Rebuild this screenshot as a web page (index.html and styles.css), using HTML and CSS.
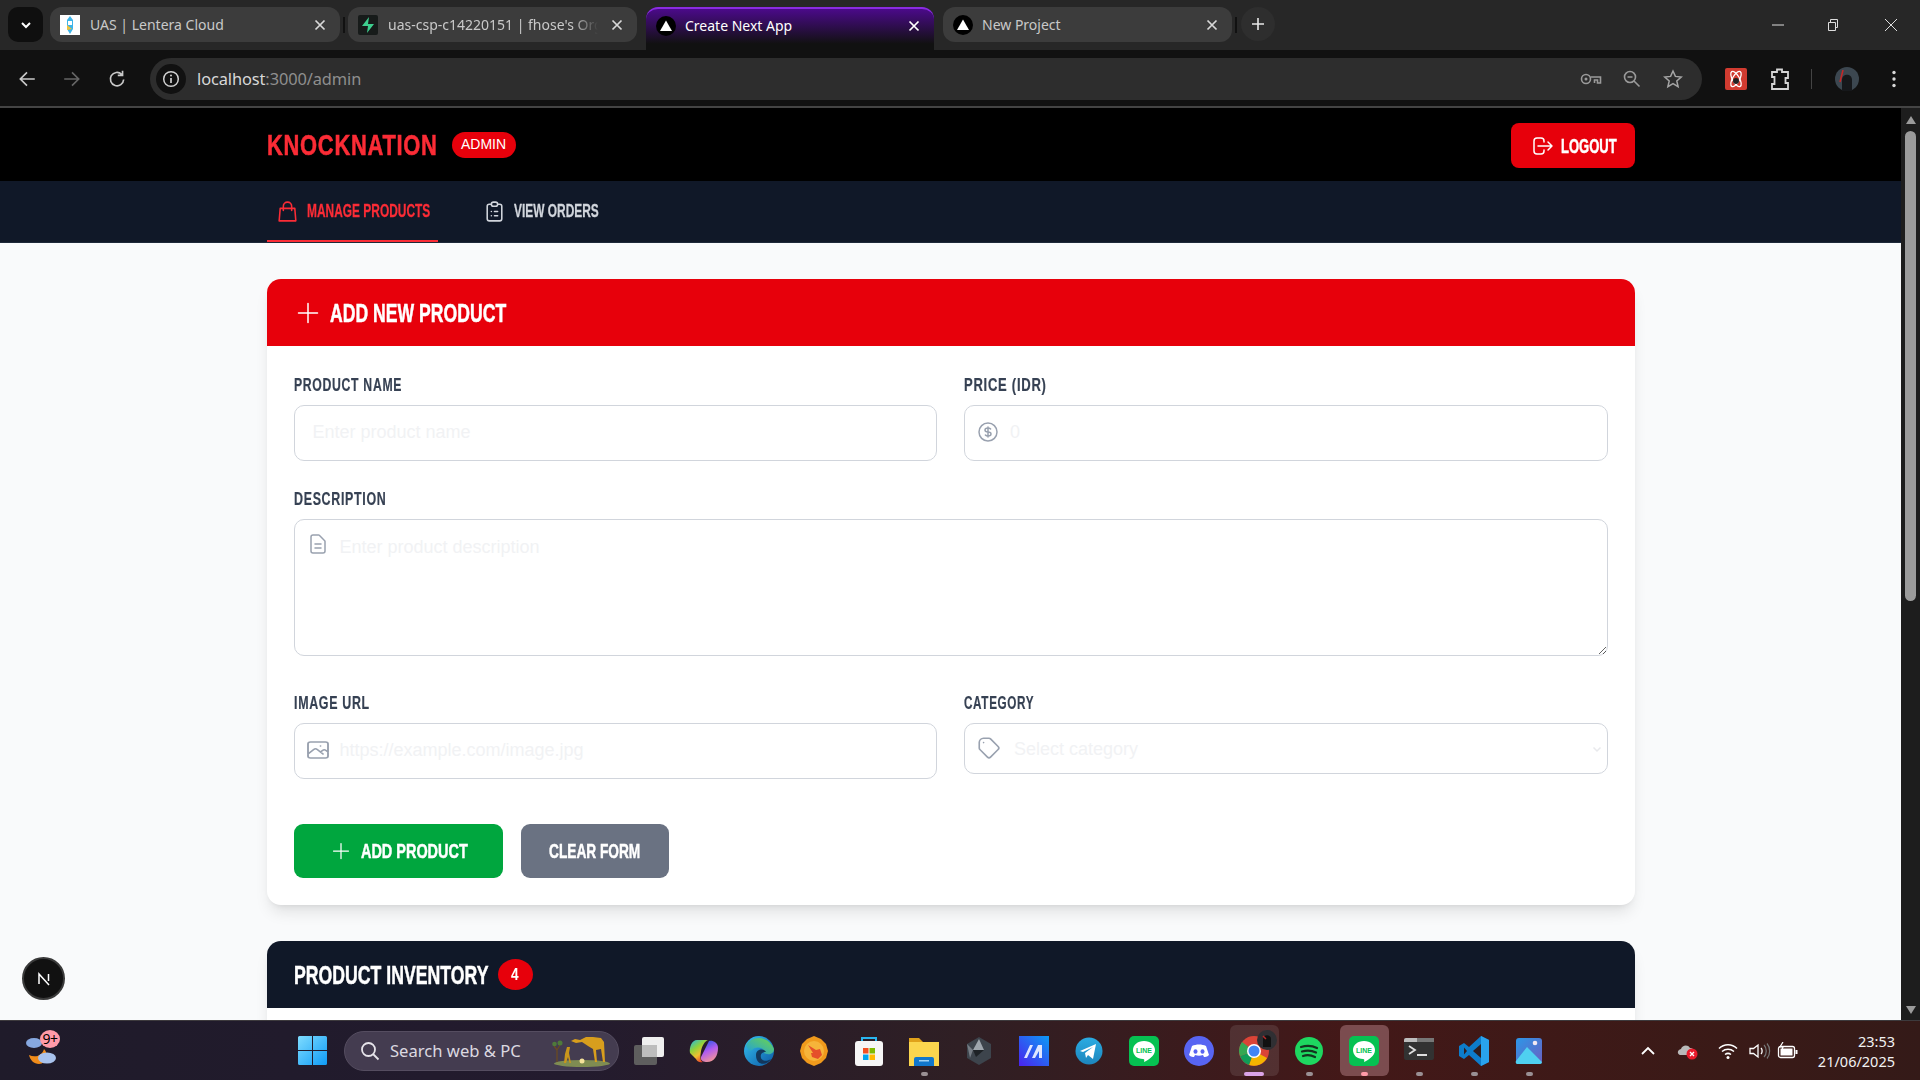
FILE: index.html
```html
<!DOCTYPE html>
<html lang="en">
<head>
<meta charset="utf-8">
<title>Create Next App</title>
<link rel="stylesheet" href="styles.css">
</head>
<body>
<div class="tabstrip">
  <div class="tabsearch"><svg class="ic12" viewBox="0 0 12 12"><path d="M2 4l4 4 4-4" fill="none" stroke="#fff" stroke-width="2"/></svg></div>
  <div class="tab t1">
    <svg class="fav" viewBox="0 0 20 20"><rect width="20" height="20" fill="#fff"/><path d="M10 1l3 4v9l-3 5-3-5V5z" fill="#3db4e8"/><rect x="8" y="6" width="4" height="4" fill="#fff"/><path d="M7 10l5 4-5 1z" fill="#f2c13a"/></svg>
    <span class="tabtxt">UAS | Lentera Cloud</span>
    <svg class="x" viewBox="0 0 12 12"><path d="M1.500 1.500l9 9m0-9l-9 9"/></svg>
  </div>
  <div class="tabsep"></div>
  <div class="tab t2">
    <svg class="fav" viewBox="0 0 20 20"><rect width="20" height="20" rx="2" fill="#171b1a"/><path d="M11 2L4 11h6l-1 7 7-9h-6z" fill="#3ecf8e"/></svg>
    <span class="tabtxt clip">uas-csp-c14220151 | fhose's Org</span>
    <svg class="x" viewBox="0 0 12 12"><path d="M1.500 1.500l9 9m0-9l-9 9"/></svg>
  </div>
  <div class="tab active">
    <svg class="fav" viewBox="0 0 20 20"><circle cx="10" cy="10" r="10" fill="#000"/><path d="M10 4.500l6 10.500H4z" fill="#fff"/></svg>
    <span class="tabtxt">Create Next App</span>
    <svg class="x" viewBox="0 0 12 12"><path d="M1.500 1.500l9 9m0-9l-9 9"/></svg>
  </div>
  <div class="tab t4">
    <svg class="fav" viewBox="0 0 20 20"><circle cx="10" cy="10" r="10" fill="#000"/><path d="M10 4.500l6 10.500H4z" fill="#fff"/></svg>
    <span class="tabtxt">New Project</span>
    <svg class="x" viewBox="0 0 12 12"><path d="M1.500 1.500l9 9m0-9l-9 9"/></svg>
  </div>
  <div class="tabsep s2"></div>
  <div class="newtab"><svg class="ic14" viewBox="0 0 14 14"><path d="M7 1v12M1 7h12" stroke="#e8e8e8" stroke-width="1.600" fill="none"/></svg></div>
  <div class="winctl">
    <svg class="wc" viewBox="0 0 14 14"><path d="M1 7h12" stroke="#ddd" fill="none"/></svg>
    <svg class="wc" viewBox="0 0 14 14"><path d="M2.500 4.500h7v8h-7zM4.500 4.500v-3h7v8h-2" stroke="#ddd" fill="none"/></svg>
    <svg class="wc wclose" viewBox="0 0 14 14"><path d="M1 1l12 12M13 1L1 13" stroke="#ddd" fill="none"/></svg>
  </div>
</div>

<div class="toolbar">
  <div class="navbtns">
    <svg class="tbi" viewBox="0 0 18 18"><path d="M16 9H3M9 3L3 9l6 6" fill="none" stroke="#c9c9c9" stroke-width="1.500"/></svg>
    <svg class="tbi" viewBox="0 0 18 18"><path d="M2 9h13M9 3l6 6-6 6" fill="none" stroke="#666" stroke-width="1.500"/></svg>
    <svg class="tbi" viewBox="0 0 18 18"><path d="M15 9.500A6 6 0 1 1 13.200 4.800M14 1.500v4.300H9.700" fill="none" stroke="#c9c9c9" stroke-width="1.500"/></svg>
  </div>
  <div class="omnibox">
    <div class="infochip"><svg class="ic18" viewBox="0 0 18 18"><circle cx="9" cy="9" r="7.300" fill="none" stroke="#d0d0d0" stroke-width="1.500"/><path d="M9 8v5" stroke="#d0d0d0" stroke-width="1.700"/><circle cx="9" cy="5.600" r="1" fill="#d0d0d0"/></svg></div>
    <div class="url">localhost<span class="urldim">:3000/admin</span></div>
    <div class="omniicons">
      <svg class="key" viewBox="0 0 22 14"><circle cx="6" cy="7" r="4.500" fill="none" stroke="#9a9a9a" stroke-width="1.600"/><circle cx="6" cy="7" r="1.500" fill="#9a9a9a"/><path d="M10.500 5H20.500v6h-3V8h-3v3" fill="none" stroke="#9a9a9a" stroke-width="1.600"/></svg>
      <svg class="ic20" viewBox="0 0 20 20"><circle cx="8" cy="8" r="5.500" fill="none" stroke="#9a9a9a" stroke-width="1.600"/><path d="M5.500 8h5M12 12l5.500 5.500" stroke="#9a9a9a" stroke-width="1.600"/></svg>
      <svg class="ic20" viewBox="0 0 20 20"><path d="M10 2l2.400 5.400 5.800.6-4.400 3.900 1.300 5.800L10 14.700l-5.100 3 1.300-5.800L1.800 8l5.800-.6z" fill="none" stroke="#a5a5a5" stroke-width="1.500"/></svg>
    </div>
  </div>
  <svg class="extred" viewBox="0 0 22 22"><rect width="22" height="22" rx="2" fill="#d13b30"/><ellipse cx="11" cy="11" rx="8.500" ry="3.500" fill="none" stroke="#fff" stroke-width="1.300" transform="rotate(60 11 11)"/><ellipse cx="11" cy="11" rx="8.500" ry="3.500" fill="none" stroke="#fff" stroke-width="1.300" transform="rotate(120 11 11)"/><circle cx="11" cy="13" r="3" fill="#222"/></svg>
  <svg class="puzzle" viewBox="0 0 20 22"><path d="M2 4h5V1.500h5V4h6v6h-2.500v5H18v6H2v-5h2.500v-7H2z" fill="none" stroke="#d5d5d5" stroke-width="1.800"/></svg>
  <div class="tbsep"></div>
  <svg class="avatar" viewBox="0 0 24 24"><circle cx="12" cy="12" r="12" fill="#3c4750"/><path d="M7 24V13c0-7 10-7 10 0v11z" fill="#16181b"/><path d="M8 3l-3 12" stroke="#c62828" stroke-width="1.500"/></svg>
  <svg class="kebab" viewBox="0 0 4 18"><circle cx="2" cy="2.500" r="1.700" fill="#d8d8d8"/><circle cx="2" cy="9" r="1.700" fill="#d8d8d8"/><circle cx="2" cy="15.500" r="1.700" fill="#d8d8d8"/></svg>
</div>

<div class="viewport">
  <div class="page">
    <header class="brandbar">
      <div class="wrap brandrow">
        <div class="brandleft">
          <span class="logo"><span class="fit">KNOCKNATION</span></span>
          <span class="adminbadge">ADMIN</span>
        </div>
        <button class="logout"><svg class="icon24" viewBox="0 0 24 24"><path d="M17 16l4-4m0 0l-4-4m4 4H7m6 4v1a3 3 0 01-3 3H6a3 3 0 01-3-3V7a3 3 0 013-3h4a3 3 0 013 3v1"/></svg><span class="logouttxt"><span class="fit">LOGOUT</span></span></button>
      </div>
    </header>
    <nav class="subnav">
      <div class="wrap navrow">
        <a class="navitem on"><svg class="navicon" viewBox="0 0 24 24"><path d="M16 11V7a4 4 0 00-8 0v4M5 9h14l1 12H4L5 9z"/></svg><span class="navtxt w1"><span class="fit">MANAGE PRODUCTS</span></span></a>
        <a class="navitem off"><svg class="navicon" viewBox="0 0 24 24"><path d="M9 5H7a2 2 0 00-2 2v12a2 2 0 002 2h10a2 2 0 002-2V7a2 2 0 00-2-2h-2M9 5a2 2 0 002 2h2a2 2 0 002-2M9 5a2 2 0 012-2h2a2 2 0 012 2m-3 7h3m-3 4h3m-6-4h.01M9 16h.01"/></svg><span class="navtxt w2"><span class="fit">VIEW ORDERS</span></span></a>
      </div>
    </nav>
    <main class="wrap content">
      <section class="card">
        <div class="cardhead red">
          <svg class="icon24" viewBox="0 0 24 24"><path d="M12 2.500v19M21.500 12h-19"/></svg>
          <h2 class="title w3"><span class="fit">ADD NEW PRODUCT</span></h2>
        </div>
        <form class="cardbody">
          <div class="formgrid">
            <div class="group">
              <label class="lbl l-name"><span class="fit">PRODUCT NAME</span></label>
              <input class="field" type="text" placeholder="Enter product name">
            </div>
            <div class="group">
              <label class="lbl l-price"><span class="fit">PRICE (IDR)</span></label>
              <div class="fieldwrap">
                <svg class="fieldicon dollar" viewBox="0 0 24 24"><path d="M12 8c-1.657 0-3 .895-3 2s1.343 2 3 2 3 .895 3 2-1.343 2-3 2m0-8c1.110 0 2.080.402 2.599 1M12 8V7m0 1v8m0 0v1m0-1c-1.110 0-2.080-.402-2.599-1M21 12a9 9 0 11-18 0 9 9 0 0118 0z"/></svg>
                <input class="field pad-price" type="text" placeholder="0">
              </div>
            </div>
            <div class="group span2">
              <label class="lbl l-desc"><span class="fit">DESCRIPTION</span></label>
              <div class="fieldwrap">
                <svg class="fieldicon doc" viewBox="0 0 24 24"><path d="M9 12h6m-6 4h6m2 5H7a2 2 0 01-2-2V5a2 2 0 012-2h5.586a1 1 0 01.707.293l5.414 5.414a1 1 0 01.293.707V19a2 2 0 01-2 2z"/></svg>
                <textarea class="field area" placeholder="Enter product description"></textarea>
              </div>
            </div>
            <div class="group">
              <label class="lbl l-url"><span class="fit">IMAGE URL</span></label>
              <div class="fieldwrap">
                <svg class="fieldicon pic" viewBox="0 0 24 24" preserveAspectRatio="none"><path d="M4 16l4.586-4.586a2 2 0 012.828 0L16 16m-2-2l1.586-1.586a2 2 0 012.828 0L20 14m-6-6h.01M6 20h12a2 2 0 002-2V6a2 2 0 00-2-2H6a2 2 0 00-2 2v12a2 2 0 002 2z"/></svg>
                <input class="field pad-url" type="text" placeholder="https://example.com/image.jpg">
              </div>
            </div>
            <div class="group">
              <label class="lbl l-cat"><span class="fit">CATEGORY</span></label>
              <div class="fieldwrap">
                <svg class="fieldicon tag" viewBox="0 0 24 24"><path d="M7 7h.01M7 3h5c.512 0 1.024.195 1.414.586l7 7a2 2 0 010 2.828l-7 7a2 2 0 01-2.828 0l-7-7A1.994 1.994 0 013 12V7a4 4 0 014-4z"/></svg>
                <div class="field select"><span>Select category</span><svg class="ic12" viewBox="0 0 12 12"><path d="M2.500 4.500L6 8l3.500-3.500" fill="none" stroke="#e8e9ec" stroke-width="1.500"/></svg></div>
              </div>
            </div>
          </div>
          <div class="actions">
            <button type="button" class="btn green"><svg class="icon20" viewBox="0 0 24 24"><path d="M12 3v18M21 12H3"/></svg><span class="btntxt w4"><span class="fit">ADD PRODUCT</span></span></button>
            <button type="button" class="btn gray"><span class="btntxt w5"><span class="fit">CLEAR FORM</span></span></button>
          </div>
        </form>
      </section>
      <section class="card second">
        <div class="cardhead navy">
          <h2 class="title w6"><span class="fit">PRODUCT INVENTORY</span></h2>
          <span class="count"><span class="fit">4</span></span>
        </div>
        <div class="clipbody"></div>
      </section>
    </main>
    <div class="nextind"><svg class="ic18" viewBox="0 0 18 18"><path d="M4 14V4l10 11M13.500 4v7" fill="none" stroke="#fff" stroke-width="1.500"/></svg></div>
  </div>
  <div class="scrollbar">
    <svg class="sarrow" viewBox="0 0 12 12"><path d="M6 2l5 8H1z" fill="#9b9b9b"/></svg>
    <div class="thumb"></div>
    <svg class="sarrow down" viewBox="0 0 12 12"><path d="M6 10L1 2h10z" fill="#9b9b9b"/></svg>
  </div>
</div>

<footer class="taskbar">
  <div class="weather">
    <svg class="weathersvg" viewBox="0 0 36 40"><path d="M5 24c6 3 13 1 15-6 5 5 3 15-5 15-5 0-9-4-10-9z" fill="#f08c1a"/><ellipse cx="10" cy="12" rx="8" ry="5" fill="#86a8e0"/><ellipse cx="23" cy="27" rx="9" ry="5.500" fill="#a8c2ec"/></svg>
    <span class="wbadge">9+</span>
  </div>
  <svg class="winlogo" viewBox="0 0 29 29"><defs><linearGradient id="w" x1="0" y1="0" x2="1" y2="1"><stop offset="0" stop-color="#7fdcff"/><stop offset="1" stop-color="#0f9bf5"/></linearGradient></defs><path d="M0 1.500A1.500 1.500 0 0 1 1.500 0H14v14H0zM15 0h12.500A1.500 1.500 0 0 1 29 1.500V14H15zM0 15h14v14H1.500A1.500 1.500 0 0 1 0 27.500zM15 15h14v12.500a1.500 1.500 0 0 1-1.500 1.500H15z" fill="url(#w)"/></svg>
  <div class="searchpill">
    <svg class="ic18b" viewBox="0 0 20 20"><circle cx="8.500" cy="8.500" r="6.500" fill="none" stroke="#e6e4ea" stroke-width="1.800"/><path d="M13 13l5.500 5.500" stroke="#e6e4ea" stroke-width="1.800"/></svg>
    <span class="searchtxt">Search web &amp; PC</span>
    <svg class="giraffe" viewBox="0 0 58 32"><ellipse cx="30" cy="28.500" rx="28" ry="3.500" fill="#7f8c52"/><path d="M5 27V15M5 15l-3-4M5 15l3-5" stroke="#6b4a22" stroke-width="1.300" fill="none"/><circle cx="2.500" cy="9" r="2.300" fill="#4f7a3a"/><circle cx="8" cy="8" r="2.500" fill="#4f7a3a"/><path d="M15 12l3 0-1 6 2 10h-1.500l-1.500-6-2 6H12l1-9z" fill="#c9951c"/><path d="M19 6l4-2 5 1 6-3 7 0 8 1 3 4 1 20h-2l-2-13-5 1 1 12h-2l-2-13-5-3-6-4-6 1z" fill="#d89e1d"/><circle cx="30" cy="26" r="2.500" fill="#f4e29a"/></svg>
  </div>
  <div class="tbicons">
    <div class="tbslot"><svg class="tbsvg" viewBox="0 0 30 30"><rect x="0" y="9" width="23" height="20" rx="2" fill="#5e5e5e"/><rect x="8" y="1" width="22" height="20" rx="2" fill="#efefef"/><rect x="8" y="9" width="15" height="12" fill="#bdbdbd"/></svg></div>
    <div class="tbslot"><svg class="tbsvg" viewBox="0 0 30 30"><defs><linearGradient id="cp" x1="0" y1="0" x2=".6" y2="1"><stop offset="0" stop-color="#1fb6f0"/><stop offset=".4" stop-color="#8fd23c"/><stop offset=".7" stop-color="#f0c030"/><stop offset="1" stop-color="#e8402a"/></linearGradient><linearGradient id="cp2" x1=".3" y1="0" x2=".7" y2="1"><stop offset="0" stop-color="#2a58e8"/><stop offset=".45" stop-color="#b05cf0"/><stop offset="1" stop-color="#f79a8e"/></linearGradient></defs><path d="M20 5c3-1 9 1 9 7 0 8-4 14-11 14-3 0-7-1-6-5z" fill="url(#cp2)"/><path d="M8 4h11c-3 1-6 6-7 11-1 6-1 10 2 11-4 1-6-1-7-3L1 17C0 11 3 4 8 4z" fill="url(#cp)"/></svg></div>
    <div class="tbslot"><svg class="tbsvg" viewBox="0 0 30 30"><defs><linearGradient id="eg" x1="0" y1="0" x2="1" y2="1"><stop offset="0" stop-color="#35c1f1"/><stop offset="1" stop-color="#0c59a4"/></linearGradient><linearGradient id="eg2" x1="0" y1="1" x2="1" y2="0"><stop offset="0" stop-color="#1b9de2"/><stop offset="1" stop-color="#6fd54a"/></linearGradient></defs><circle cx="15" cy="15" r="15" fill="url(#eg)"/><path d="M2 10C6 0 24-2 30 13c0 6-7 6-10 4 2-5-8-8-12-3-2 2-4 0-6-4z" fill="url(#eg2)"/><path d="M12 19c0-6 8-7 10-3-4 0-6 2-5 6 1 3 6 4 10 1-4 7-15 7-15-4z" fill="#132b4a" opacity=".85"/></svg></div>
    <div class="tbslot"><svg class="tbsvg" viewBox="0 0 30 30"><path d="M15 0l7 3 5 5 2 7-2 7-5 5-7 3-7-3-5-5-2-7 2-7 5-5z" fill="#f09a1c"/><circle cx="15" cy="15" r="10" fill="#f6b43a"/><path d="M9 9l8 5 4-1 2 6-4 4-6-2-1-4 2 0z" fill="#e5502a"/></svg></div>
    <div class="tbslot"><svg class="tbsvg" viewBox="0 0 30 30"><path d="M8 5V2h14v3" fill="none" stroke="#29b6f0" stroke-width="2"/><rect x="1" y="5" width="28" height="25" rx="3" fill="#f6f6f6"/><rect x="9" y="12" width="5.500" height="5.500" fill="#f25022"/><rect x="15.500" y="12" width="5.500" height="5.500" fill="#7fba00"/><rect x="9" y="18.500" width="5.500" height="5.500" fill="#00a4ef"/><rect x="15.500" y="18.500" width="5.500" height="5.500" fill="#ffb900"/></svg></div>
    <div class="tbslot dot"><svg class="tbsvg" viewBox="0 0 30 30"><path d="M0 2h10l4 4h16v24H0z" fill="#e0a21a"/><rect y="6" width="30" height="24" fill="#fbd64e"/><path d="M5 23a2 2 0 0 1 2-2h16a2 2 0 0 1 2 2v7H5z" fill="#1177cc"/><rect x="10" y="24" width="10" height="1.500" fill="#9fd3f5"/></svg></div>
    <div class="tbslot"><svg class="tbsvg" viewBox="0 0 30 30"><path d="M15 1l12 7v14l-12 7-12-7V8z" fill="#3d444c"/><path d="M15 3l5 11H9z" fill="#9ea6ad"/><path d="M9 14h11l-8 7z" fill="#1e2226"/><path d="M3 8l6 6-3 8z" fill="#767d85"/></svg></div>
    <div class="tbslot"><svg class="tbsvg" viewBox="0 0 30 30"><defs><linearGradient id="ma" x1="0" y1="1" x2="1" y2="0"><stop offset="0" stop-color="#4b22ee"/><stop offset="1" stop-color="#0c9bf5"/></linearGradient></defs><rect width="30" height="30" fill="url(#ma)"/><path d="M5 22l6-13h3l-6 13zM13 22l6-13h4v13h-3V15l-4 7z" fill="#dfe6ff"/></svg></div>
    <div class="tbslot"><svg class="tbsvg" viewBox="0 0 30 30"><defs><linearGradient id="tg" x1="0" y1="0" x2="0" y2="1"><stop offset="0" stop-color="#2aabe2"/><stop offset="1" stop-color="#1d86bd"/></linearGradient></defs><circle cx="15" cy="15" r="13.500" fill="url(#tg)"/><path d="M6 15l16-7-3 15-5-4-2 3-1-5 8-6-10 5z" fill="#fff"/></svg></div>
    <div class="tbslot"><svg class="tbsvg" viewBox="0 0 30 30"><rect width="30" height="30" rx="5" fill="#06c152"/><path d="M15 5c6.500 0 11 4 11 9 0 6-7 10-11 12 .500-2 .500-3-1-3C8 23 4 19 4 14c0-5 4.500-9 11-9z" fill="#fff"/><text x="15" y="17" class="linetxt">LINE</text></svg></div>
    <div class="tbslot"><svg class="tbsvg" viewBox="0 0 30 30"><circle cx="15" cy="15" r="15" fill="#5865f2"/><path d="M8 10c4-2 10-2 14 0l3 9c-2 2-4 2-5 2l-1-2c-3 1-5 1-8 0l-1 2c-1 0-3 0-5-2z" fill="#fff"/><ellipse cx="11.500" cy="15.500" rx="2" ry="2.300" fill="#5865f2"/><ellipse cx="18.500" cy="15.500" rx="2" ry="2.300" fill="#5865f2"/></svg></div>
    <div class="tbslot hl1 pill"><svg class="tbsvg" viewBox="0 0 30 30"><circle cx="15" cy="15" r="15" fill="#db4437"/><path d="M15 15L28 22A15 15 0 0 1 10 29z" fill="#f4b400"/><path d="M15 15L10 29A15 15 0 0 1 1 20z" fill="#0f9d58"/><path d="M1 20A15 15 0 0 1 3 6l12 9z" fill="#34a853"/><circle cx="15" cy="15" r="7" fill="#fff"/><circle cx="15" cy="15" r="5.500" fill="#4285f4"/></svg><svg class="chromeav" viewBox="0 0 20 20"><circle cx="10" cy="10" r="10" fill="#2f2f33"/><path d="M6 17V9c0-5 8-5 8 0v8z" fill="#111"/><path d="M6 6l3 3" stroke="#b52a2a" stroke-width="1.500"/></svg></div>
    <div class="tbslot dot"><svg class="tbsvg" viewBox="0 0 30 30"><circle cx="15" cy="15" r="14" fill="#1ed760"/><path d="M7 11c5-1.500 11-1.500 16 1M8 15.500c4-1.200 10-1 14 1M9 20c3-1 8-1 12 1" fill="none" stroke="#14331f" stroke-width="2.200" stroke-linecap="round"/></svg></div>
    <div class="tbslot hl2 dot pink"><svg class="tbsvg" viewBox="0 0 30 30"><rect width="30" height="30" rx="5" fill="#06c152"/><path d="M15 5c6.500 0 11 4 11 9 0 6-7 10-11 12 .500-2 .500-3-1-3C8 23 4 19 4 14c0-5 4.500-9 11-9z" fill="#fff"/><text x="15" y="17" class="linetxt">LINE</text></svg></div>
    <div class="tbslot dot"><svg class="tbsvg" viewBox="0 0 30 30"><rect y="2" width="30" height="22" rx="2" fill="#323232"/><path d="M0 4a2 2 0 0 1 2-2h11v4H0z" fill="#bdbdbd"/><path d="M13 2h17v4H13z" fill="#777"/><path d="M5 10l6 4-6 4" fill="none" stroke="#ddd" stroke-width="1.800"/><rect x="13" y="18" width="10" height="2" fill="#ddd"/></svg></div>
    <div class="tbslot dot"><svg class="tbsvg" viewBox="0 0 30 30"><path d="M22 0l8 4v22l-8 4-12-11-5 4-5-3v-10l5-3 5 4z" fill="#0d7ccb"/><path d="M22 0l8 4v22l-8 4z" fill="#29a3ee"/><path d="M22 8l-8 7 8 7z" fill="#2f1d1f"/><path d="M5 11.500L8 15l-3 3.500z" fill="#2f1d1f"/></svg></div>
    <div class="tbslot dot"><svg class="tbsvg" viewBox="0 0 30 30"><defs><linearGradient id="ph" x1="0" y1="0" x2="1" y2="1"><stop offset="0" stop-color="#2c97e8"/><stop offset="1" stop-color="#6b5fc0"/></linearGradient></defs><rect x="2" y="2" width="26" height="26" rx="3" fill="url(#ph)"/><circle cx="21" cy="7" r="2.300" fill="#f3e9f2"/><path d="M2 25L13 11l15 15v0a2 2 0 0 1-2 2H4a2 2 0 0 1-2-3z" fill="#4fd0f0"/></svg></div>
  </div>
  <div class="tray">
    <svg class="trayic chev" viewBox="0 0 16 16"><path d="M2 11l6-6 6 6" fill="none" stroke="#fff" stroke-width="1.800"/></svg>
    <svg class="trayic od" viewBox="0 0 22 20"><path d="M3 14c-3-1-3-5 1-6 1-4 7-5 9-1 3 0 4 2 4 4l-5 3z" fill="#b9b9b9"/><circle cx="15" cy="13" r="5.500" fill="#e81b2c"/><path d="M13 11l4 4m0-4l-4 4" stroke="#fff" stroke-width="1.300"/></svg>
    <svg class="trayic wifi" viewBox="0 0 20 18"><path d="M1 6.500c5-5 13-5 18 0M4 9.500c3.500-3 8.500-3 12 0M7 12.500c2-1.500 4-1.500 6 0" fill="none" stroke="#fff" stroke-width="1.500"/><circle cx="10" cy="15.500" r="1.500" fill="#fff"/></svg>
    <svg class="trayic spk" viewBox="0 0 22 18"><path d="M1 6.500h3.500L9 3v12l-4.500-3.500H1z" fill="none" stroke="#fff" stroke-width="1.300"/><path d="M12 6c1.500 1.500 1.500 4.500 0 6" fill="none" stroke="#fff" stroke-width="1.300"/><path d="M15 3c3 3 3 9 0 12M18 1.500c3.500 4 3.500 11 0 15" fill="none" stroke="#777" stroke-width="1.200"/></svg>
    <svg class="trayic bat" viewBox="0 0 22 18"><rect x="1.500" y="4.500" width="16" height="11" rx="2" fill="none" stroke="#fff" stroke-width="1.300"/><rect x="3.500" y="6.500" width="12" height="7" fill="#fff"/><rect x="18.500" y="8" width="2" height="4" fill="#fff"/><path d="M6 0L3 5h3L5 8" fill="none" stroke="#fff" stroke-width="1.200"/></svg>
    <div class="clock"><div>23:53</div><div>21/06/2025</div></div>
  </div>
</footer>
</body>
</html>
```
FILE: styles.css
```css
* { box-sizing: border-box; }
html, body { margin: 0; height: 100%; overflow: hidden; }
body { display: flex; flex-direction: column; width: 1920px; height: 1080px; font-family: "Liberation Sans", Arial, sans-serif; background: #f9fafb; }
svg { display: block; flex: none; }
.ic12 { width: 12px; height: 12px; }
.ic14 { width: 14px; height: 14px; }
.ic18 { width: 18px; height: 18px; }
.ic20 { width: 20px; height: 20px; }

/* browser */
.tabstrip { height: 50px; background: #272727; display: flex; align-items: flex-start; padding: 7px 0 0 8px; flex: none; }
.tabsearch { width: 35px; height: 35px; margin-right: 7px; border-radius: 10px; background: #0f0f0f; display: flex; align-items: center; justify-content: center; }
.tab { height: 35px; border-radius: 12px; background: #3c3c3c; display: flex; align-items: center; padding: 0 10px; color: #c9c9c9; font: 14px/20px "Noto Sans", sans-serif; }
.t1 { width: 290px; }
.t2 { width: 289px; }
.tab.active { width: 288px; height: 43px; margin-left: 9px; padding-bottom: 8px; color: #fff; border-top: 2px solid #8a2be2; border-radius: 12px 12px 0 0; background: linear-gradient(#4b0a8a, #111 85%); }
.t4 { width: 289px; margin-left: 9px; }
.fav { width: 20px; height: 20px; margin-right: 10px; }
.active .fav { margin-right: 9px; }
.t4 .fav { margin-right: 9px; }
.tabtxt { flex: 1; white-space: nowrap; overflow: hidden; }
.clip { -webkit-mask-image: linear-gradient(90deg, #000 88%, transparent); mask-image: linear-gradient(90deg, #000 88%, transparent); margin-right: 13px; }
.x { width: 12px; height: 12px; fill: none; stroke: #d8d8d8; stroke-width: 1.700; margin-right: 4px; }
.active .x { stroke: #fff; }
.tabsep { width: 2px; height: 16px; background: #111; margin: 10px 3px 0; }
.s2 { margin: 10px 0 0 3px; }
.newtab { width: 34px; height: 34px; border-radius: 50%; background: #2e2e2e; display: flex; align-items: center; justify-content: center; margin-left: 4px; }
.winctl { margin-left: auto; display: flex; gap: 41px; padding: 11px 22px 0 0; }
.wc { width: 14px; height: 14px; }
.wclose { margin-left: 3px; }

.toolbar { height: 58px; flex: none; background: #111; border-bottom: 2px solid #444; display: flex; align-items: center; padding-top: 2px; }
.navbtns { display: flex; gap: 25px; width: 150px; padding-left: 17px; }
.tbi { width: 20px; height: 20px; }
.omnibox { width: 1552px; height: 42px; border-radius: 21px; background: #2d2d2d; display: flex; align-items: center; padding: 0 19px 0 6px; }
.infochip { width: 30px; height: 30px; border-radius: 50%; background: #111; display: flex; align-items: center; justify-content: center; }
.url { margin-left: 11px; font: 16.400px/20px "Noto Sans", sans-serif; color: #d8d8d8; letter-spacing: -.1px; }
.urldim { color: #8f8f8f; }
.omniicons { margin-left: auto; display: flex; align-items: center; gap: 21px; }
.key { width: 22px; height: 14px; margin-right: -1px; }
.extred { width: 22px; height: 22px; margin-left: 23px; }
.puzzle { width: 20px; height: 22px; margin-left: 23px; }
.tbsep { width: 1px; height: 20px; background: #444; margin-left: 21px; }
.avatar { width: 24px; height: 24px; margin-left: 23px; }
.kebab { width: 4px; height: 18px; margin-left: 33px; }

/* app */
.viewport { height: 912px; flex: none; display: flex; overflow: hidden; }
.page { flex: 1; background: #f9fafb; position: relative; overflow: hidden; }
.wrap { width: 1368px; margin: 0 auto; }
.scrollbar { width: 19px; background: #1d1d1d; display: flex; flex-direction: column; align-items: center; padding-top: 6px; }
.sarrow { width: 12px; height: 12px; }
.down { margin-top: auto; margin-bottom: 4px; }
.thumb { width: 11px; height: 470px; border-radius: 6px; background: #9b9b9b; margin-top: 5px; }

/* condensed display text: a sans squeezed horizontally, in a box of the measured width */
.fit { display: inline-block; white-space: nowrap; transform-origin: left center; }
.brandbar { height: 73px; background: #000; }
.brandrow { height: 100%; display: flex; align-items: center; justify-content: space-between; }
.brandleft { display: flex; align-items: center; gap: 15px; }
.logo { width: 170px; font: bold 30px/1 "Liberation Sans", sans-serif; color: #fb2c36; letter-spacing: 1px; -webkit-text-stroke: .6px #fb2c36; }
.logo .fit { transform: scaleX(.73); }
.adminbadge { height: 26px; width: 64px; border-radius: 13px; background: #e7000b; color: #fff; font: 14px/24px "Liberation Sans", sans-serif; text-align: center; }
.logout { width: 124px; height: 45px; margin-top: 2px; border: 0; border-radius: 8px; background: #e7000b; color: #fff; display: flex; align-items: center; padding: 0 0 0 20px; gap: 6px; }
.logouttxt { width: 56px; font: bold 21px/1 "Liberation Sans", sans-serif; -webkit-text-stroke: .5px #fff; }
.logouttxt .fit { transform: scaleX(.62); }
.icon20, .icon24, .navicon { fill: none; stroke: currentColor; stroke-width: 1.500; stroke-linecap: round; stroke-linejoin: round; }
.icon20 { width: 20px; height: 20px; }
.icon24 { width: 24px; height: 24px; color: #fff; }
.navicon { width: 25px; height: 25px; }

.subnav { height: 62px; background: #101828; border-bottom: 1px solid #1e2939; }
.navrow { display: flex; height: 100%; }
.navitem { height: 61px; display: flex; align-items: center; gap: 7px; color: #d1d5dc; }
.navitem.on { color: #fb2c36; border-bottom: 2px solid #fb2c36; padding: 2px 0 0 8px; width: 171px; }
.navitem.off { margin-left: 44px; }
.navtxt { font: bold 18.500px/1 "Liberation Sans", sans-serif; -webkit-text-stroke: .3px currentColor; }
.w1 { width: 123px; }
.w1 .fit { transform: scaleX(.645); }
.w2 { width: 85px; }
.w2 .fit { transform: scaleX(.644); }

.content { padding-top: 36px; }
.card { background: #fff; border-radius: 14px; box-shadow: 0 10px 15px -3px rgba(0,0,0,.1), 0 4px 6px -4px rgba(0,0,0,.1); overflow: hidden; }
.second { margin-top: 36px; }
.clipbody { height: 40px; }
.cardhead { height: 67px; display: flex; align-items: center; padding: 0 27px; color: #fff; }
.red { background: #e7000b; gap: 10px; padding-left: 29px; }
.navy { background: #101828; gap: 10px; }
.title { margin: 0; font: bold 26px/1 "Liberation Sans", sans-serif; -webkit-text-stroke: .5px #fff; }
.w3 { width: 177px; }
.w3 .fit { transform: scaleX(.678); }
.w6 { width: 194px; }
.w6 .fit { transform: scaleX(.68); }
.count { width: 35px; height: 31px; border-radius: 50%; background: #e7000b; text-align: center; font: bold 17px/31px "Liberation Sans", sans-serif; }
.count .fit { transform-origin: center; transform: scaleX(.8); }
.cardbody { padding: 27px; }
.formgrid { display: grid; grid-template-columns: 1fr 1fr; column-gap: 27px; row-gap: 26px; }
.group { min-width: 0; }
.span2 { grid-column: span 2; margin-bottom: 9px; }
.lbl { display: block; height: 22px; margin-bottom: 10px; font: bold 18px/24px "Liberation Sans", sans-serif; color: #364153; letter-spacing: 1px; -webkit-text-stroke: .2px #364153; }
.l-name .fit { transform: scaleX(.68); }
.l-price .fit { transform: scaleX(.725); }
.l-desc .fit { transform: scaleX(.69); }
.l-url .fit { transform: scaleX(.69); }
.l-cat .fit { transform: scaleX(.65); }
.field { display: block; width: 100%; height: 56px; border: 1px solid #d1d5dc; border-radius: 10px; padding: 0 18px 2px; background: #fff; font: 18px/1 "Liberation Sans", sans-serif; outline: 0; color: #111; }
.field::placeholder { color: #f1f2f4; opacity: 1; }
.fieldwrap { position: relative; }
.fieldicon { position: absolute; fill: none; stroke: #99a1af; stroke-width: 1.500; stroke-linecap: round; stroke-linejoin: round; }
.dollar { left: 12px; top: 15px; width: 24px; height: 24px; }
.doc { left: 12px; top: 13px; width: 24px; height: 24px; }
.pic { left: 9px; top: 15px; width: 30px; height: 24px; }
.tag { left: 12px; top: 12px; width: 26px; height: 26px; }
.pad-price { padding-left: 45px; }
.pad-url { padding-left: 45px; }
.area { height: 137px; padding: 18px 19px 0 45px; resize: vertical; }
.select { height: 51px; padding: 0 4px 0 49px; display: flex; align-items: center; justify-content: space-between; color: #f1f2f4; }
.actions { display: flex; gap: 18px; margin-top: 45px; }
.btn { height: 54px; border: 0; border-radius: 9px; color: #fff; display: flex; align-items: center; padding: 0; }
.green { width: 209px; background: #00a63e; gap: 10px; padding-left: 37px; }
.gray { width: 148px; background: #6a7282; padding-left: 28px; }
.btntxt { font: bold 21px/1 "Liberation Sans", sans-serif; padding-bottom: 2px; -webkit-text-stroke: .5px #fff; }
.w4 { width: 106px; }
.w4 .fit { transform: scaleX(.688); }
.w5 { width: 92px; }
.w5 .fit { transform: scaleX(.652); }
.nextind { position: absolute; left: 22px; top: 849px; width: 43px; height: 43px; border-radius: 50%; background: #111; border: 2px solid #3a3a3a; display: flex; align-items: center; justify-content: center; }

/* taskbar */
.taskbar { height: 60px; flex: none; border-top: 1px solid #3d3a3d; background: linear-gradient(90deg, #1f1b2a 0, #231b2e 30%, #2f1f24 50%, #431818 70%, #3a1a17 90%, #341a18 100%); display: flex; align-items: center; position: relative; }
.weather { width: 36px; height: 40px; margin-left: 24px; position: relative; }
.weathersvg { width: 36px; height: 40px; }
.wbadge { position: absolute; left: 16px; top: -1px; width: 20px; height: 18px; border-radius: 50%; background: #ff9aa8; color: #000; font: 14px/18px "Noto Sans", sans-serif; text-align: center; letter-spacing: -.5px; }
.winlogo { width: 29px; height: 29px; margin-left: 238px; }
.searchpill { width: 275px; height: 40px; margin-left: 17px; border-radius: 20px; background: #443c50; border: 1px solid #554d60; display: flex; align-items: center; padding-left: 15px; color: #dcd9e0; }
.ic18b { width: 20px; height: 20px; }
.searchtxt { margin-left: 10px; font: 16.600px/20px "Noto Sans", sans-serif; }
.giraffe { width: 58px; height: 32px; margin-left: auto; margin-right: 8px; }
.tbicons { display: flex; margin-left: 2.500px; }
.tbslot { width: 55px; height: 59px; display: flex; align-items: center; justify-content: center; position: relative; }
.tbsvg { width: 30px; height: 30px; }
.linetxt { font: bold 7px "Liberation Sans", sans-serif; fill: #06c152; text-anchor: middle; }
.dot::after, .pill::after { content: ""; position: absolute; left: 24px; bottom: 4px; width: 7px; height: 4px; border-radius: 2px; background: #9a9094; }
.pill::after { left: 17px; width: 20px; background: #dba4e8; }
.pink::after { background: #ff9aa8; }
.hl1::before, .hl2::before { content: ""; position: absolute; top: 4px; bottom: 4px; left: 3px; right: 3px; border-radius: 6px; background: rgba(255,255,255,.1); }
.hl2::before { background: rgba(255,200,210,.3); }
.hl1 svg, .hl2 svg { position: relative; }
.chromeav { position: absolute !important; width: 20px; height: 20px; left: 30px; top: 9px; }
.tray { margin-left: auto; display: flex; align-items: center; padding-right: 25px; }
.chev { width: 16px; height: 16px; }
.od { width: 22px; height: 20px; margin-left: 21px; }
.wifi { width: 20px; height: 18px; margin-left: 19px; }
.spk { width: 22px; height: 18px; margin-left: 11px; }
.bat { width: 22px; height: 18px; margin-left: 6px; }
.clock { margin-left: 19px; color: #f2f2f2; font: 14.500px/20px "Noto Sans", sans-serif; text-align: right; }
```
